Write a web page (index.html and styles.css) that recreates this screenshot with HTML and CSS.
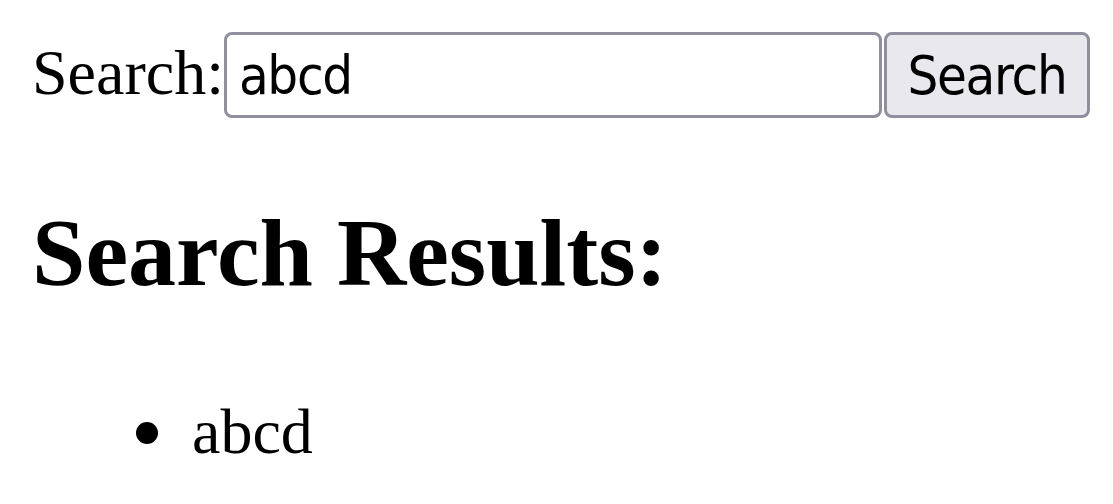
FILE: index.html
```html
<!DOCTYPE html>
<html>
<head>
<meta charset="utf-8">
<link rel="stylesheet" href="styles.css">
</head>
<body>
<form class="search"><label class="search-label">Search:</label><input class="search-input" type="text" value="abcd"><button class="search-btn" type="button">Search</button></form>
<h2 class="results-title">Search Results:</h2>
<ul class="results">
<li class="result">abcd</li>
</ul>
</body>
</html>
```

FILE: styles.css
```css
html, body {
  background: #fff;
}
body {
  margin: 32px 0 0 32px;
  font-family: "Liberation Serif", "Times New Roman", serif;
  font-size: 64px;
  color: #000;
}
.search {
  display: flex;
  align-items: baseline;
  margin: 0;
  white-space: nowrap;
}
.search-label {
  line-height: 1.15;
  flex-shrink: 0;
}
.search-input,
.search-btn {
  font-family: "DejaVu Sans Condensed", "DejaVu Sans", sans-serif;
  font-stretch: condensed;
  font-size: 54px;
  letter-spacing: -1.3px;
  color: #000;
  box-sizing: border-box;
  height: 86px;
  border: 3px solid #8f8f9d;
  border-radius: 8px;
  margin: 0;
  flex-shrink: 0;
}
.search-input {
  width: 658px;
  padding: 0 12px;
  background: #fff;
  outline: none;
}
.search-btn {
  width: 206px;
  margin-left: 2px;
  padding: 0 18px;
  background: #e9e9ed;
}
.results-title {
  font-size: 96px;
  font-weight: bold;
  margin: 80px 0;
  line-height: 1.15;
}
.results {
  margin: 87px 0 0;
  padding-left: 160px;
  line-height: 1.15;
  list-style: none;
}
.result::before {
  content: "";
  display: inline-block;
  width: 22px;
  height: 22px;
  border-radius: 50%;
  background: #000;
  margin-left: -56px;
  margin-right: 34px;
  vertical-align: 9px;
}
```
